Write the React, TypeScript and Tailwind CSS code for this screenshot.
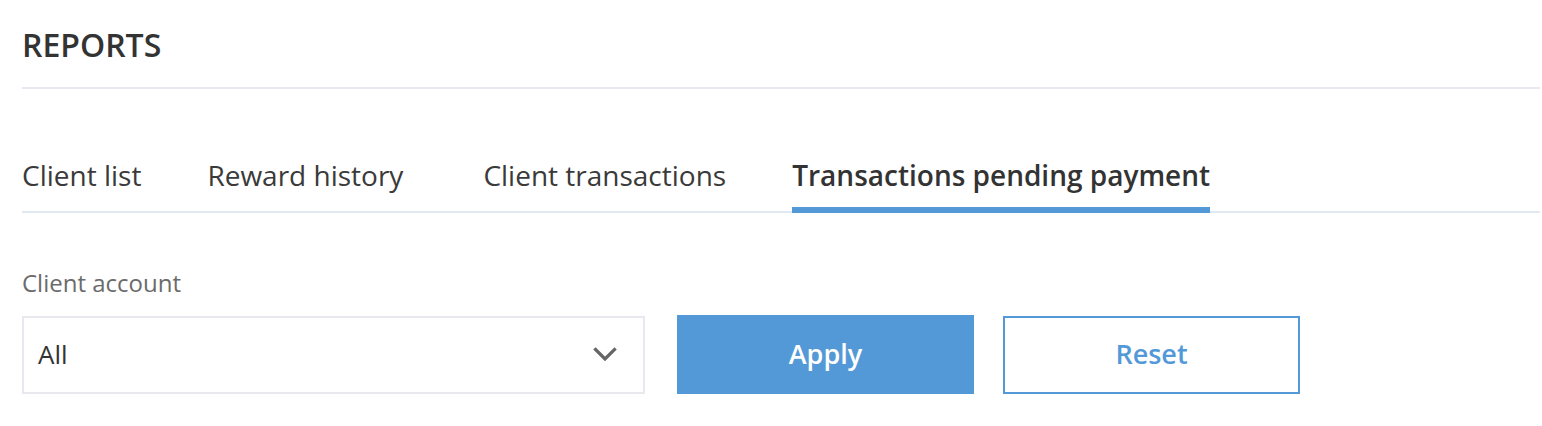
import { useState } from "react";

const TABS = [
  { label: "Client list", extra: "" },
  { label: "Reward history", extra: "mr-[14px]" },
  { label: "Client transactions", extra: "" },
  { label: "Transactions pending payment", extra: "" },
];

export default function App() {
  const [active, setActive] = useState(3);
  const [account, setAccount] = useState("All");

  return (
    <div
      className="min-h-screen bg-white pl-[22px] pr-[2px] text-[#333333]"
      style={{ fontFamily: '"Open Sans", "Noto Sans", sans-serif' }}
    >
      {/* Header */}
      <div className="pt-[25px] pb-[22px] border-b-2 border-[#e6e9ef]">
        <h1 className="text-[32px] leading-[40px] font-semibold">REPORTS</h1>
      </div>

      {/* Tabs */}
      <div className="mt-[68px] flex gap-[66px] border-b-2 border-[#e2e8f0]">
        {TABS.map((tab, i) => (
          <button
            key={tab.label}
            onClick={() => setActive(i)}
            className={`flex flex-col items-stretch text-left ${tab.extra}`}
          >
            <span
              className={`text-[28px] leading-[36px] whitespace-nowrap ${
                i === active ? "font-semibold text-[#333333]" : "text-[#3a3a3a]"
              }`}
            >
              {tab.label}
            </span>
            <span
              className={`mt-[14px] -mb-[2px] h-[6px] ${
                i === active ? "bg-[#5499d7]" : "bg-transparent"
              }`}
            />
          </button>
        ))}
      </div>

      {/* Filters */}
      <div className="mt-[55px]">
        <p className="text-[24px] leading-[30px] text-[#6b6b6b]">
          Client account
        </p>
        <div className="mt-[17px] flex items-center">
          <button className="flex h-[78px] w-[623px] items-center justify-between border-2 border-[#e8e9ee] bg-white pl-[14px] pr-[26px]">
            <span className="text-[26px] text-[#333333]">{account}</span>
            <svg
              width="24"
              height="15"
              viewBox="0 0 24 15"
              fill="none"
              stroke="#666666"
              strokeWidth="3.2"
              strokeLinecap="square"
            >
              <path d="M2.5 2.5 L12 12 L21.5 2.5" />
            </svg>
          </button>
          <button className="ml-[32px] h-[79px] w-[297px] bg-[#5499d7] text-[27px] font-semibold text-white">
            Apply
          </button>
          <button
            onClick={() => setAccount("All")}
            className="ml-[29px] h-[78px] w-[297px] border-2 border-[#5499d7] bg-white text-[27px] font-semibold text-[#5499d7]"
          >
            Reset
          </button>
        </div>
      </div>
    </div>
  );
}
